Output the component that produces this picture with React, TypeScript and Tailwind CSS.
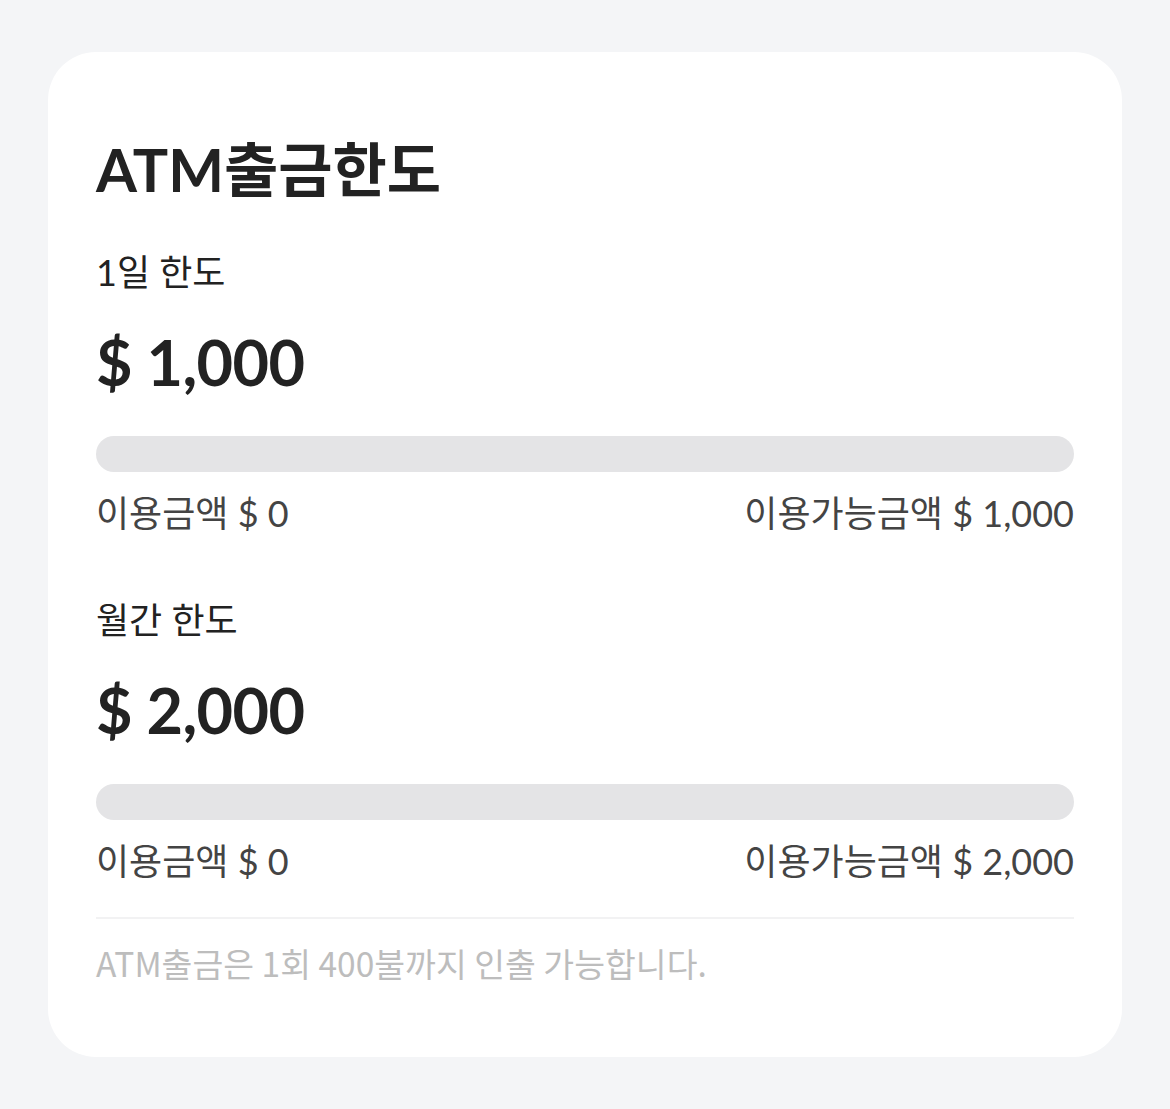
import React from "react";

type LimitProps = {
  label: string;
  amount: string;
  used: string;
  available: string;
  first?: boolean;
};

const LimitBlock = ({ label, amount, used, available, first }: LimitProps) => {
  return (
    <div className={first ? "mt-[42px]" : "mt-[59px]"}>
      <div className="text-[36px] leading-[48px] text-[#222222]">{label}</div>
      <div className="mt-[26px] text-[63px] leading-[80px] font-bold text-[#222222] tracking-[-0.01em]">
        {amount}
      </div>
      <div className="mt-[34px] h-[36px] w-full rounded-full bg-[#e4e4e6]" />
      <div className="mt-[17px] flex items-center justify-between text-[36px] leading-[48px] text-[#444444]">
        <span>{used}</span>
        <span>{available}</span>
      </div>
    </div>
  );
};

export default function App() {
  return (
    <div
      className="min-h-screen w-full bg-[#f4f5f7] pt-[52px]"
      style={{ fontFamily: 'Lato, "Noto Sans CJK KR", sans-serif' }}
    >
      <div className="mx-[48px] rounded-[48px] bg-white px-[48px] pt-[82px] pb-[74px]">
        <h1 className="text-[59px] leading-[72px] font-bold text-[#222222]">ATM출금한도</h1>

        <LimitBlock first label="1일 한도" amount="$ 1,000" used="이용금액 $ 0" available="이용가능금액 $ 1,000" />
        <LimitBlock label="월간 한도" amount="$ 2,000" used="이용금액 $ 0" available="이용가능금액 $ 2,000" />

        <div className="mt-[32px] h-[2px] w-full bg-[#f2f2f3]" />
        <p
          className="mt-[24px] text-[33.5px] leading-[40px] text-[#bdbdbd]"
          style={{ fontFamily: '"Noto Sans CJK KR", sans-serif' }}
        >
          ATM출금은 1회 400불까지 인출 가능합니다.
        </p>
      </div>
    </div>
  );
}
